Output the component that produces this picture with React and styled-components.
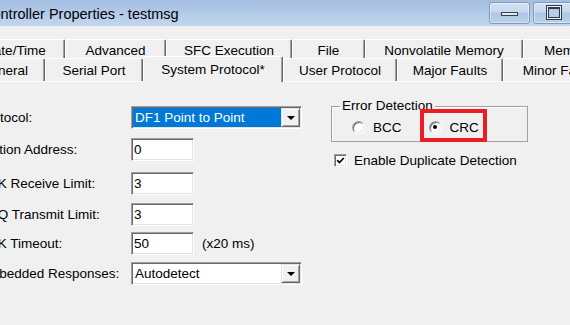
import React from 'react';
import styled, { createGlobalStyle } from 'styled-components';

const GlobalStyle = createGlobalStyle`
  html, body {
    margin: 0;
    padding: 0;
    background: #f0f0f0;
    overflow: hidden;
  }
  body {
    font-family: "Liberation Sans", Arial, sans-serif;
    font-size: 13.5px;
    color: #000;
  }
`;

const Window = styled.div`
  width: 570px;
  height: 325px;
  overflow: hidden;
  background: #f0f0f0;
`;

const TitleBar = styled.div`
  display: flex;
  align-items: flex-start;
  height: 26px;
  background: linear-gradient(#a3bee0, #b4cbe8 55%, #c2d6ee);
`;

const Title = styled.div`
  flex: 1;
  margin-left: -18px;
  padding-top: 6px;
  font-size: 14.5px;
  line-height: 17px;
  white-space: nowrap;
`;

const Controls = styled.div`
  display: flex;
  gap: 3px;
  margin-top: 2px;
  margin-right: -4px;
`;

const CaptionButton = styled.div`
  width: 41px;
  height: 22px;
  box-sizing: border-box;
  border: 1px solid #8199bb;
  border-radius: 3px;
  background: linear-gradient(#d3e1f3, #c6d8ef 45%, #afc7e5 50%, #bad0ea);
  box-shadow: inset 0 0 0 1px rgba(255, 255, 255, 0.45);
  display: flex;
  justify-content: center;
  align-items: flex-start;
`;

const MinGlyph = styled.span`
  width: 17px;
  height: 4px;
  margin-top: 9px;
  box-sizing: border-box;
  border: 1px solid #36424f;
  background: #e2e8ef;
`;

const MaxGlyph = styled.span`
  width: 16px;
  height: 15px;
  margin-top: 2px;
  box-sizing: border-box;
  border: 1px solid #2f3b4a;
  padding: 1px;
  background: #eef2f7;
  display: flex;
`;

const MaxInner = styled.span`
  flex: 1;
  border: 1px solid #2f3b4a;
  border-top-width: 2px;
  background: #b7cde8;
`;

const TabStrip = styled.div`
  padding-top: 13px;
`;

const TabRow = styled.div`
  display: flex;
  height: ${(p) => p.$h}px;
  margin-left: ${(p) => p.$shift}px;
`;

const Tab = styled.div`
  flex: none;
  width: ${(p) => p.$w}px;
  height: ${(p) => (p.$sel ? 'calc(100% + 3px)' : '100%')};
  margin-top: ${(p) => (p.$sel ? -2 : 0)}px;
  position: ${(p) => (p.$sel ? 'relative' : 'static')};
  z-index: ${(p) => (p.$sel ? 1 : 'auto')};
  box-sizing: border-box;
  padding-top: ${(p) => p.$pt}px;
  border-top: 1px solid #fff;
  border-left: 1px solid #fff;
  border-right: 1px solid #696969;
  border-radius: 2px 2px 0 0;
  box-shadow: inset -1px 0 #a0a0a0;
  background: #f0f0f0;
  display: flex;
  justify-content: center;
  line-height: 15px;
  white-space: nowrap;
`;

const Page = styled.div`
  border-top: 1px solid #fff;
  display: flex;
  align-items: flex-start;
`;

const Form = styled.div`
  flex: none;
  width: 323px;
  margin-left: -21px;
`;

const FieldRow = styled.div`
  display: flex;
  align-items: center;
  height: 23px;
  margin-top: ${(p) => p.$mt}px;
`;

const Label = styled.div`
  flex: none;
  width: 152px;
  line-height: 15px;
  white-space: nowrap;
`;

const TextBox = styled.div`
  width: 63px;
  height: 23px;
  box-sizing: border-box;
  border: 1px solid;
  border-color: #a0a0a0 #fff #fff #a0a0a0;
  box-shadow: inset 1px 1px #696969, inset -1px -1px #e3e3e3;
  background: #fff;
  padding-left: 2px;
  display: flex;
  align-items: center;
  line-height: 15px;
`;

const Hint = styled.div`
  margin-left: 8px;
  line-height: 15px;
`;

const Combo = styled.div`
  width: 171px;
  height: 23px;
  box-sizing: border-box;
  border: 1px solid;
  border-color: #a0a0a0 #fff #fff #a0a0a0;
  box-shadow: inset 1px 1px #696969, inset -1px -1px #e3e3e3;
  background: #fff;
  padding: 1px;
  display: flex;
`;

const ComboText = styled.div`
  flex: 1;
  padding-left: 2px;
  display: flex;
  align-items: center;
  line-height: 15px;
  background: ${(p) => (p.$sel ? '#0078d7' : '#fff')};
  color: ${(p) => (p.$sel ? '#fff' : '#000')};
`;

const DropButton = styled.div`
  flex: none;
  width: 19px;
  box-sizing: border-box;
  border: 1px solid;
  border-color: #e3e3e3 #696969 #696969 #e3e3e3;
  box-shadow: inset 1px 1px #fff, inset -1px -1px #a0a0a0;
  background: #f0f0f0;
  display: flex;
  justify-content: center;
  align-items: center;
`;

const Arrow = styled.span`
  width: 0;
  height: 0;
  border-left: 4px solid transparent;
  border-right: 4px solid transparent;
  border-top: 4px solid #000;
`;

const Side = styled.div`
  flex: none;
  margin-left: 29px;
  display: flex;
  flex-direction: column;
`;

const GroupBox = styled.div`
  position: relative;
  margin-top: 24px;
  width: 197px;
  height: 36px;
  box-sizing: border-box;
  border: 1px solid #a0a0a0;
  box-shadow: inset 1px 1px #fff;
  padding: 6px 0 0 20px;
  display: flex;
  align-items: center;
`;

const Legend = styled.div`
  position: absolute;
  left: 8px;
  top: -9px;
  padding: 0 2px;
  background: #f0f0f0;
  line-height: 15px;
  white-space: nowrap;
`;

const RadioItem = styled.div`
  display: flex;
  align-items: center;
  gap: 8px;
  line-height: 15px;
  margin-right: ${(p) => p.$mr || 0}px;
`;

const RadioCircle = styled.span`
  width: 13px;
  height: 13px;
  box-sizing: border-box;
  border-radius: 50%;
  border: 1px solid;
  border-color: #a0a0a0 #fff #fff #a0a0a0;
  box-shadow: inset 1px 1px #696969, inset -1px -1px #e3e3e3;
  background: #fff;
  display: flex;
  justify-content: center;
  align-items: center;
`;

const Dot = styled.span`
  width: 4px;
  height: 4px;
  border-radius: 50%;
  background: #000;
`;

const RedMark = styled.div`
  position: absolute;
  left: 88px;
  top: 2px;
  width: 67px;
  height: 33px;
  box-sizing: border-box;
  border: 4px solid #ed1c24;
`;

const CheckRow = styled.div`
  display: flex;
  align-items: center;
  gap: 7px;
  height: 15px;
  margin-top: 11px;
  margin-left: 3px;
  line-height: 15px;
  white-space: nowrap;
`;

const CheckBox = styled.span`
  width: 13px;
  height: 13px;
  box-sizing: border-box;
  border: 1px solid;
  border-color: #a0a0a0 #fff #fff #a0a0a0;
  box-shadow: inset 1px 1px #696969, inset -1px -1px #e3e3e3;
  background: #fff;
  display: flex;
  justify-content: center;
  align-items: center;
`;

const topTabs = [
  ['Date/Time', 100],
  ['Advanced', 101],
  ['SFC Execution', 126],
  ['File', 73],
  ['Nonvolatile Memory', 158],
  ['Memory', 91],
];

const frontTabs = [
  ['General', 82],
  ['Serial Port', 98],
  ['System Protocol*', 140, true],
  ['User Protocol', 114],
  ['Major Faults', 106],
  ['Minor Faults', 114],
];

function Radio({ label, checked, mr }) {
  return (
    <RadioItem $mr={mr}>
      <RadioCircle>{checked && <Dot />}</RadioCircle>
      {label}
    </RadioItem>
  );
}

function Dropdown({ value, selected }) {
  return (
    <Combo>
      <ComboText $sel={selected}>{value}</ComboText>
      <DropButton>
        <Arrow />
      </DropButton>
    </Combo>
  );
}

export default function App() {
  return (
    <Window>
      <GlobalStyle />
      <TitleBar>
        <Title>Controller Properties - testmsg</Title>
        <Controls>
          <CaptionButton>
            <MinGlyph />
          </CaptionButton>
          <CaptionButton>
            <MaxGlyph>
              <MaxInner />
            </MaxGlyph>
          </CaptionButton>
        </Controls>
      </TitleBar>

      <TabStrip>
        <TabRow $h={19} $shift={-35}>
          {topTabs.map(([name, w]) => (
            <Tab key={name} $w={w} $pt={3}>
              {name}
            </Tab>
          ))}
        </TabRow>
        <TabRow $h={23} $shift={-37}>
          {frontTabs.map(([name, w, sel]) => (
            <Tab key={name} $w={w} $sel={sel} $pt={sel ? 5 : 4}>
              {name}
            </Tab>
          ))}
        </TabRow>
      </TabStrip>

      <Page>
        <Form>
          <FieldRow $mt={24}>
            <Label>Protocol:</Label>
            <Dropdown value="DF1 Point to Point" selected />
          </FieldRow>
          <FieldRow $mt={9}>
            <Label>Station Address:</Label>
            <TextBox>0</TextBox>
          </FieldRow>
          <FieldRow $mt={11}>
            <Label>NAK Receive Limit:</Label>
            <TextBox>3</TextBox>
          </FieldRow>
          <FieldRow $mt={8}>
            <Label>ENQ Transmit Limit:</Label>
            <TextBox>3</TextBox>
          </FieldRow>
          <FieldRow $mt={6}>
            <Label>ACK Timeout:</Label>
            <TextBox>50</TextBox>
            <Hint>(x20 ms)</Hint>
          </FieldRow>
          <FieldRow $mt={7}>
            <Label>Embedded Responses:</Label>
            <Dropdown value="Autodetect" />
          </FieldRow>
        </Form>

        <Side>
          <GroupBox>
            <Legend>Error Detection</Legend>
            <Radio label="BCC" mr={27} />
            <Radio label="CRC" checked />
            <RedMark />
          </GroupBox>
          <CheckRow>
            <CheckBox>
              <svg width="9" height="9" viewBox="0 0 9 9">
                <path d="M1.2 4.2 L3.4 6.5 L7.8 2" fill="none" stroke="#000" strokeWidth="1.7" />
              </svg>
            </CheckBox>
            Enable Duplicate Detection
          </CheckRow>
        </Side>
      </Page>
    </Window>
  );
}
